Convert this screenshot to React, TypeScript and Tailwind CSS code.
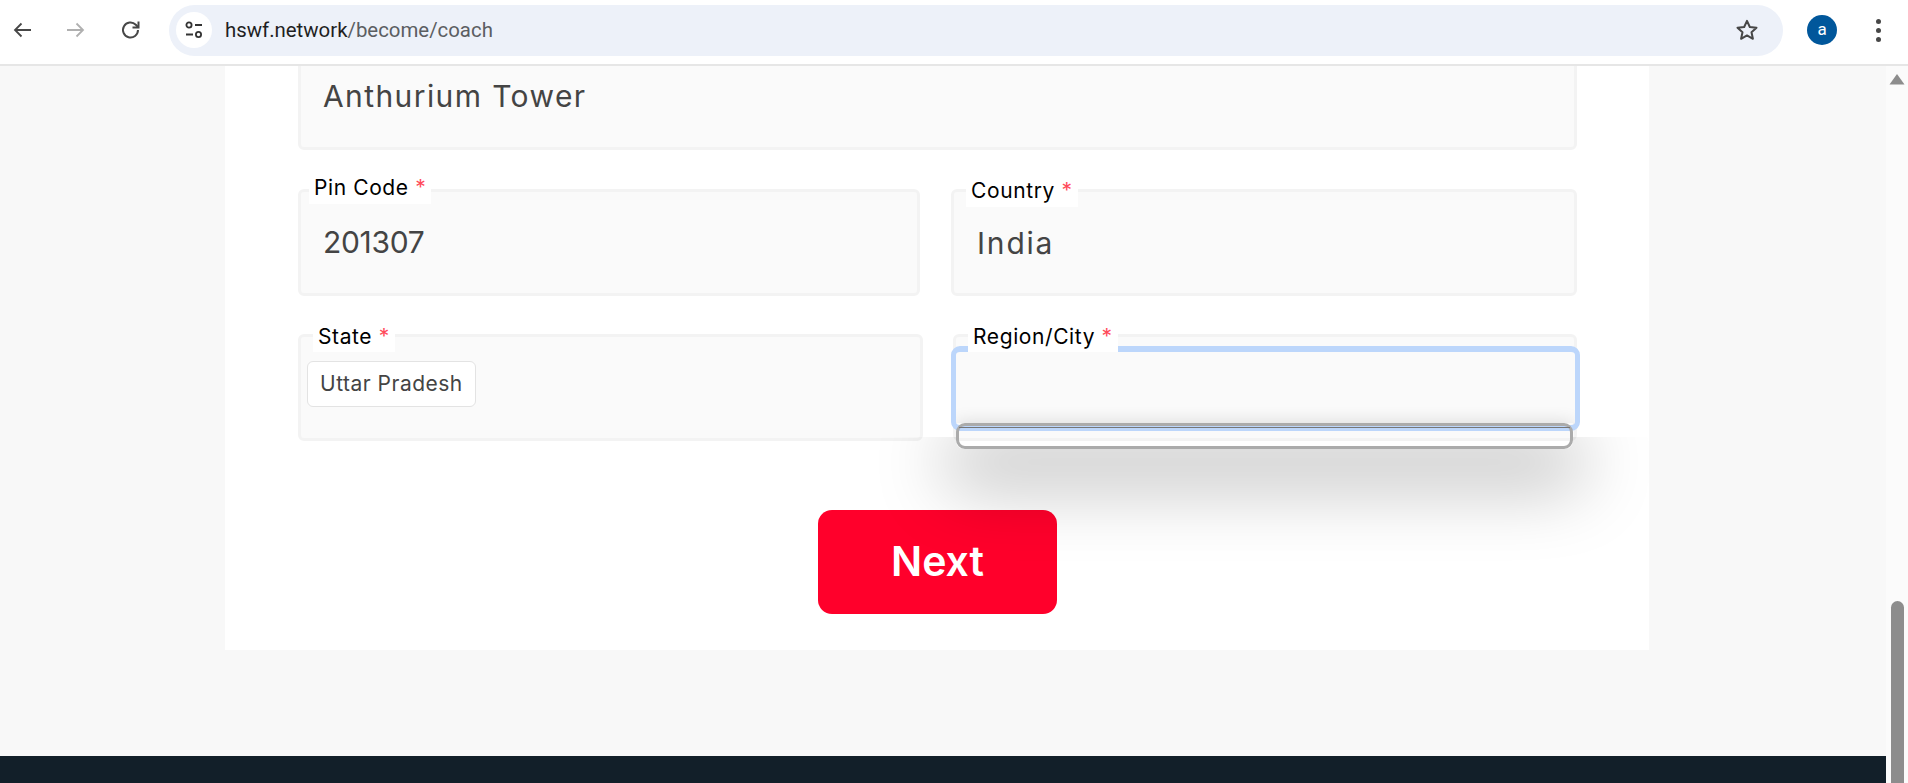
import { ReactNode } from "react";

const dropShadow = "shadow-[0_26px_70px_12px_rgba(0,0,0,0.26)]";
const poppins = "font-['Inter','Noto_Sans',sans-serif]";

function Field({ label, labelClass, children }: { label?: string; labelClass?: string; children?: ReactNode }) {
  return (
    <div className="relative h-[107px] rounded-md border-[3px] border-[#f3f3f3] bg-[#fafafa]">
      {label && (
        <div className={`absolute z-20 bg-white px-[5px] text-[21px] leading-[28px] tracking-[0.6px] text-black ${labelClass}`}>
          {label} <span className="text-[#ff4a5a]">*</span>
        </div>
      )}
      {children}
    </div>
  );
}

function Value({ children, className }: { children: ReactNode; className?: string }) {
  return <div className={`text-[30px] leading-[34px] text-[#444] ${className}`}>{children}</div>;
}

function Toolbar() {
  return (
    <div className="flex h-[66px] shrink-0 items-center border-b-2 border-[#e6e6e6] bg-white pb-[4px]">
      <div className="flex w-[169px] shrink-0 items-center">
        <svg className="ml-[12px]" width="20" height="20" viewBox="0 0 20 20" fill="none" stroke="#474747" strokeWidth="1.8">
          <path d="M19 10H3M9.500 3.500 3 10l6.500 6.500" />
        </svg>
        <svg className="ml-[34px]" width="20" height="20" viewBox="0 0 20 20" fill="none" stroke="#b0b0b0" strokeWidth="1.8">
          <path d="M1 10h16M10.500 3.500 17 10l-6.500 6.500" />
        </svg>
        <svg className="ml-[34px]" width="22" height="22" viewBox="0 0 22 22" fill="none" stroke="#474747" strokeWidth="2">
          <path d="M18 11a7.500 7.500 0 1 1-2.200-5.300L18 8" />
          <path d="M18.500 2.500V8.500H12.500" fill="none" />
        </svg>
      </div>
      <div className="flex h-[51px] w-[1614px] shrink-0 items-center rounded-full bg-[#edf1f9] pl-[7px] pr-[24px]">
        <div className="flex h-[36px] w-[36px] items-center justify-center rounded-full bg-white">
          <svg width="20" height="20" viewBox="0 0 20 20" fill="none" stroke="#333" strokeWidth="1.8">
            <circle cx="5" cy="5" r="2.600" />
            <path d="M11 5h7M2 14.500h7" />
            <circle cx="14.500" cy="14.500" r="2.600" />
          </svg>
        </div>
        <div className="ml-[13px] flex-1 font-['Roboto',sans-serif] text-[20.4px] leading-none text-[#1f1f1f]">
          hswf.network<span className="text-[#5b5e62]">/become/coach</span>
        </div>
        <svg width="24" height="24" viewBox="0 0 24 24" fill="none" stroke="#474747" strokeWidth="2" strokeLinejoin="round">
          <path d="m12 2.800 2.800 6.200 6.700.7-5 4.500 1.400 6.600-5.900-3.400-5.900 3.400 1.400-6.600-5-4.500 6.700-.7z" />
        </svg>
      </div>
      <div className="ml-[24px] flex h-[30px] w-[30px] items-center justify-center rounded-full bg-[#01579b] font-['Roboto',sans-serif] text-[17px] text-white">
        a
      </div>
      <div className="ml-[39px] flex flex-col gap-[4px]">
        <span className="h-[5px] w-[5px] rounded-full bg-[#474747]" />
        <span className="h-[5px] w-[5px] rounded-full bg-[#474747]" />
        <span className="h-[5px] w-[5px] rounded-full bg-[#474747]" />
      </div>
    </div>
  );
}

function RegionOverlay() {
  return (
    <>
      {/* focus ring on the search input */}
      <div className="absolute left-[-5px] top-[9px] z-10 h-[85px] w-[629px] overflow-hidden rounded-[9px] border-x-[5px] border-y-[6px] border-[#bcd6fb] bg-[#fafafa]">
        <div className="absolute left-0 top-[71px] h-[26px] w-[617px] shadow-[0_0_18px_rgba(0,0,0,0.14)]" />
      </div>
      {/* shadow of the empty dropdown, cut off at its clip box */}
      <div className="pointer-events-none absolute left-[-150px] top-[100px] z-30 h-[220px] w-[920px] overflow-hidden">
        <div className={`absolute left-[150px] top-[-14px] h-[26px] w-[617px] rounded-lg ${dropShadow}`} />
      </div>
      <div className="absolute left-0 top-[86px] z-40 h-[26px] w-[617px] rounded-[9px] border-[3px] border-[#ababab]">
        <div className="mt-[1px] h-px bg-[#777]" />
      </div>
    </>
  );
}

export default function App() {
  return (
    <div className={`flex h-[783px] w-[1908px] flex-col overflow-hidden bg-[#f8f8f8] ${poppins}`}>
      <Toolbar />
      <div className="flex min-h-0 flex-1">
        <div className="flex w-[1886px] shrink-0 flex-col overflow-hidden">
          <div className="ml-[225px] w-[1424px] bg-white pb-[36px] pl-[73px] pr-[72px]">
            <div className="-mt-[23px]">
              <Field>
                <Value className="pl-[22px] pt-[33px] tracking-[1.4px]">Anthurium Tower</Value>
              </Field>
            </div>

            <div className="mt-[39px] grid grid-cols-[622px_626px] gap-x-[31px]">
              <Field label="Pin Code" labelClass="left-[8px] top-[-18px] pb-[2px]">
                <Value className="pl-[22px] pt-[33px] tracking-[-0.3px]">201307</Value>
              </Field>
              <Field label="Country" labelClass="left-[12px] top-[-15px] pb-[2px]">
                <Value className="pl-[23px] pt-[34px] tracking-[1.8px]">India</Value>
              </Field>
            </div>

            <div className="mt-[38px] grid grid-cols-[625px_624px] gap-x-[30px]">
              <Field label="State" labelClass="left-[12px] top-[-14px] pb-[1px]">
                <div className="ml-[6px] mt-[24px] inline-block h-[46px] w-[169px] rounded-[6px] border border-[#e3e3e3] bg-white pl-[12px] text-[21px] leading-[44px] tracking-[0.5px] text-[#444]">
                  Uttar Pradesh
                </div>
              </Field>
              <Field label="Region/City" labelClass="left-[12px] top-[-14px] pb-[1px]">
                <RegionOverlay />
              </Field>
            </div>

            <div className="mt-[69px] flex justify-center">
              <button className="h-[104px] w-[239px] rounded-[14px] bg-[#ff002b] text-[41px] font-semibold text-white">
                Next
              </button>
            </div>
          </div>
          <div className="mt-[106px] flex-1 bg-[#121f29]" />
        </div>
        <div className="relative flex w-[22px] shrink-0 flex-col items-center bg-[#fbfbfb] pt-[7px]">
          <svg width="16" height="12" viewBox="0 0 16 12">
            <path d="M8 1 15.500 11.500H.5z" fill="#8d8d8d" strokeLinejoin="round" />
          </svg>
          <div className="mt-auto h-[182px] w-[13px] rounded-t-full bg-[#8d8d8d]" />
        </div>
      </div>
    </div>
  );
}
